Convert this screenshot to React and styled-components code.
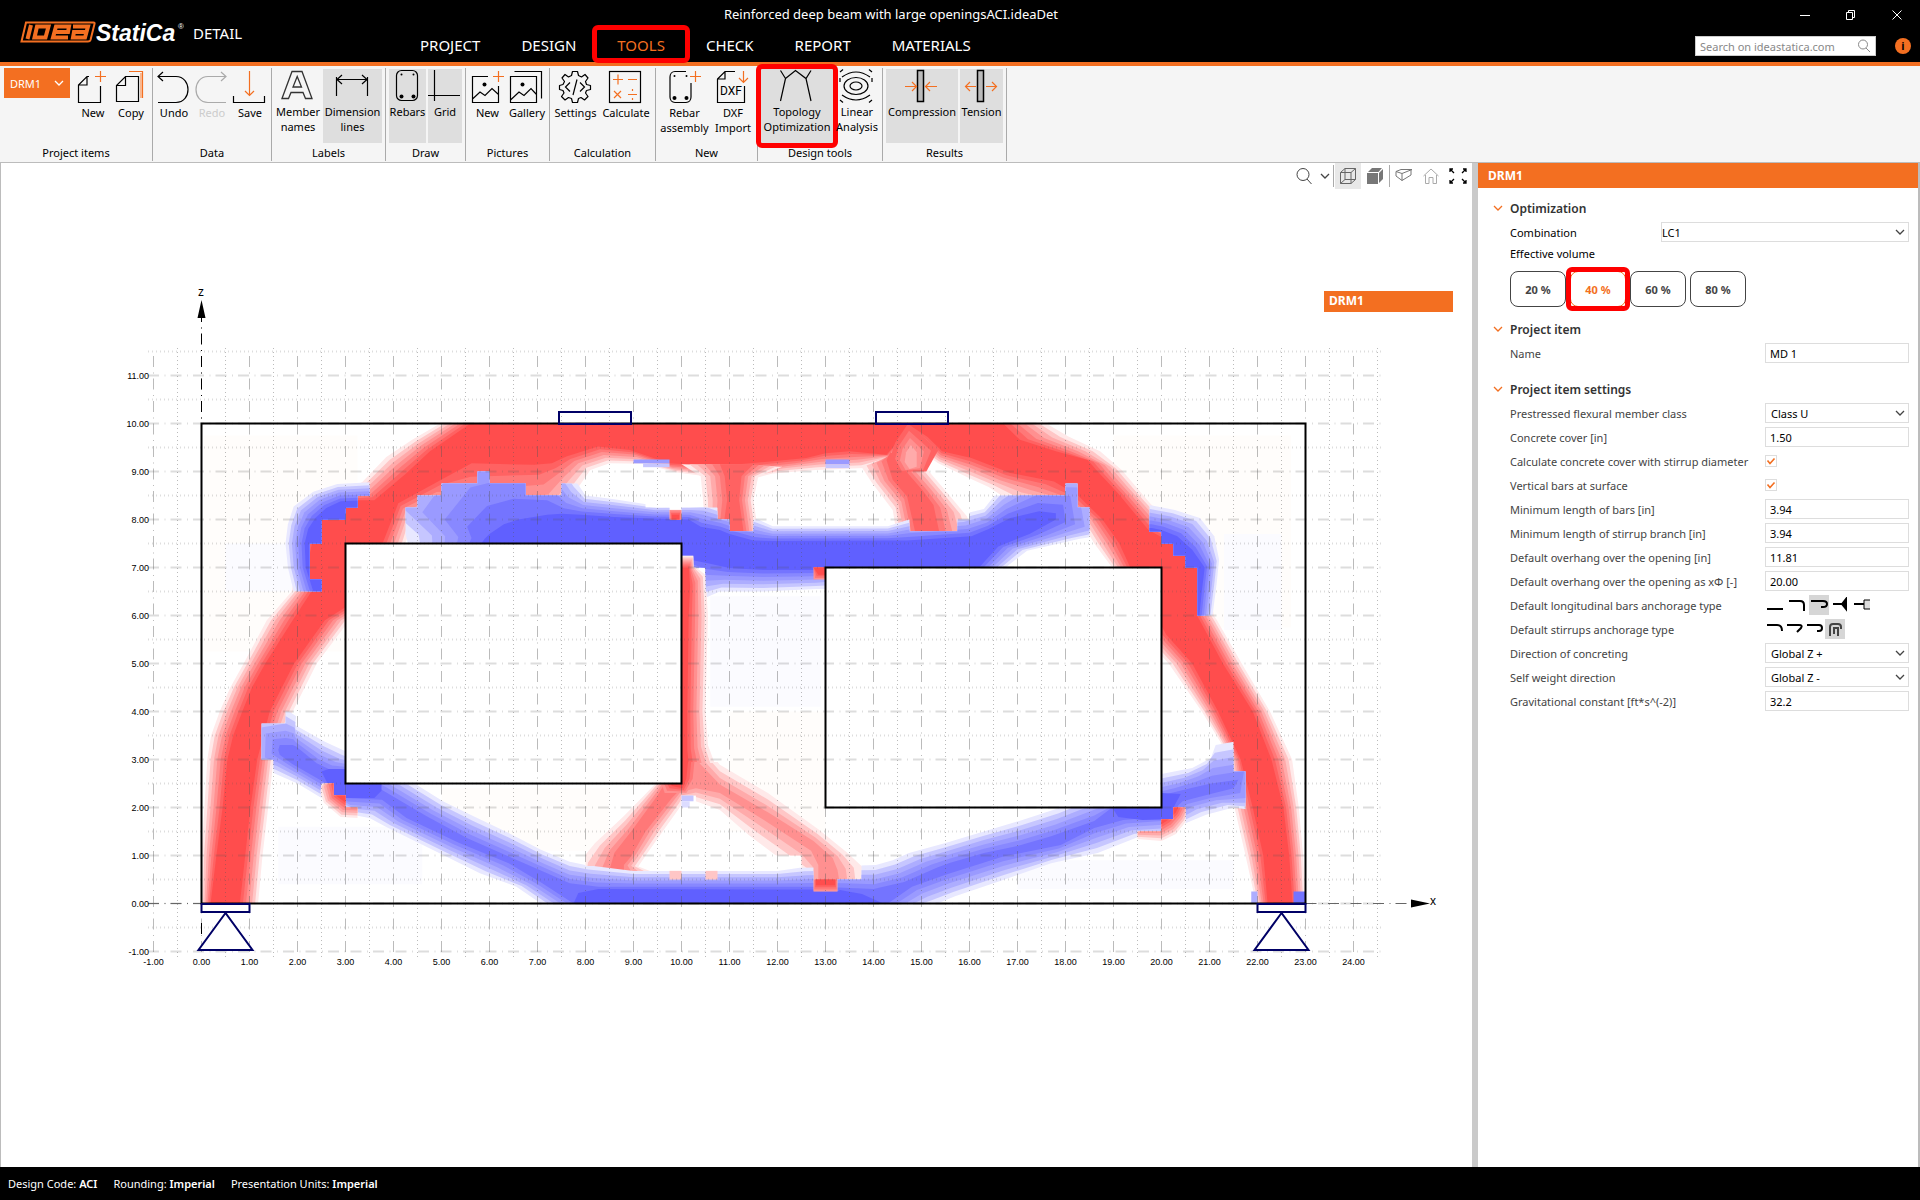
import React, { useState } from "react";
import styled, { createGlobalStyle } from "styled-components";

// ----------- Ribbon icons -----------

const ORANGE = "#f36f21";

const icons = {
  newItem: (
    <>
      <path d="M13 6.500H11L2.500 15V32.500H24.500V16M11 6.500V15H2.500" />
      <path d="M24.500 1V12M19 6.500H30" stroke={ORANGE} />
    </>
  ),
  copy: (
    <>
      <path d="M11.500 6.500H24.500V31.500H2.500V15.500ZM11.500 6.500V15.500H2.500" />
      <path d="M15 1.500H28.500V28" stroke={ORANGE} />
      <path d="M27 3V28" stroke="#f9b78f" strokeWidth="2" />
    </>
  ),
  undo: <path d="M1 6.500H19C35 6.500 35 32.500 19 32.500H1M6 2L1 6.500L6 11" />,
  redo: <path d="M31 6.500H13C-3 6.500 -3 32.500 13 32.500H31M26 2L31 6.500L26 11" />,
  save: (
    <>
      <path d="M0.500 26V32.500H31.500V26" />
      <path d="M16.500 1V25M12 21L16.500 25.500L21 21" stroke={ORANGE} />
    </>
  ),
  letterA: (
    <path d="M1 29.500L11 2.500H21L31 29.500H24.500L22 23.500H10L7.500 29.500ZM12 18H20.500L16.200 7.500Z" stroke="#333" strokeWidth="1.300" />
  ),
  dimension: <path d="M0.500 8V27M31.500 8V27M1 10.500H31M6 6L1 10.500L6 15M26 6L31 10.500L26 15" />,
  rebars: (
    <>
      <rect x="5.500" y="1.500" width="21" height="30" rx="5" />
      <g fill="#000" stroke="none">
        <circle cx="10.500" cy="27.500" r="2" />
        <circle cx="22.500" cy="27.500" r="2" />
        <circle cx="10.500" cy="5.500" r="1" />
        <circle cx="22.500" cy="5.500" r="1" />
      </g>
    </>
  ),
  grid: <path d="M6.500 1V32M0 26.500H32" />,
  picture: (
    <>
      <path d="M17 6.500H1.500V32.500H27.500V16M1.500 29L9 22L14 25.500L21 18.500L27.500 24.500" />
      <circle cx="13.500" cy="14.500" r="2" fill="#000" stroke="none" />
      <path d="M27.500 1V12M22 6.500H33" stroke={ORANGE} />
    </>
  ),
  gallery: (
    <>
      <path d="M0.500 6.500H26.500V32.500H0.500ZM4.500 1.500H31.500V28.500M0.500 30L9 22L14 25.500L21 18.500L26.500 24.500" />
      <circle cx="12.500" cy="14.500" r="2" fill="#000" stroke="none" />
    </>
  ),
  settings: (
    <>
      <path d="M13.500 1.500H18.500L19.500 5.500L22.500 7L26 4.500L29 8L26.500 11.500L27.500 14.500L31.500 15.500V19.500L27.500 20.500L26.500 23L29 26.500L25.500 30L22 27.500L19.500 28.500L18.500 32.500H13.500L12.500 28.500L9.500 27.500L6 30L2.500 26.500L5 23L4 20.500L0.500 19.500V15.500L4 14.500L5.500 11.500L3 8L6 4.500L9.500 7L12.500 5.500Z" strokeLinejoin="round" />
      <path d="M11 12.500L6.500 17L11 21.500M21 12.500L25.500 17L21 21.500M18 9.500L14 25" />
    </>
  ),
  calculate: (
    <>
      <rect x="0.500" y="1.500" width="31" height="31" />
      <path d="M4 9.500H14M9 4.500V14.500M19 9.500H28M5 21L12 28M12 21L5 28M19 24.500H28M23.500 19V21M23.500 28V30" stroke={ORANGE} />
    </>
  ),
  rebarNew: (
    <>
      <path d="M18 1.500H7C4 1.500 2 4 2 7V27C2 30 4 32.500 7 32.500H18C21 32.500 23 30 23 27V13" />
      <g fill="#000" stroke="none">
        <circle cx="6.500" cy="28" r="2" />
        <circle cx="18.500" cy="28" r="2" />
        <circle cx="6.500" cy="6" r="1" />
        <circle cx="18.500" cy="6" r="1" />
      </g>
      <path d="M27.500 1V12M22 6.500H33" stroke={ORANGE} />
    </>
  ),
  dxf: (
    <>
      <path d="M19 1.500H9L1.500 9V32.500H28.500V16M9 1.500V9H1.500" />
      <path d="M27.500 1V12M23 8L27.500 12.500L32 8" stroke={ORANGE} />
      <text x="4" y="25" fontSize="12" fontFamily="Roboto, sans-serif" fill="#000" stroke="none">DXF</text>
    </>
  ),
  topology: <path d="M0.500 1.500L5.500 9.500L0.500 32M5.500 9.500L15.500 1.500L26 9.500L31 1.500M26 9.500L31 32" />,
  linear: (
    <>
      <ellipse cx="16" cy="17" rx="6" ry="4" />
      <ellipse cx="16" cy="17" rx="12" ry="8.500" />
      <path d="M2 8Q16 -2 30 8M2 26Q16 36 30 26M0 3L3 0.500M32 3L29 0.500M0 31L3 33.500M32 31L29 33.500M0 13V9M32 13V9" />
    </>
  ),
  compression: (
    <>
      <rect x="12.500" y="1.500" width="6" height="31" fill="#bbb" strokeWidth="1.500" />
      <path d="M0 17.500H11M7 13L11.500 17.500L7 22M32 17.500H21M25 13L20.500 17.500L25 22" stroke={ORANGE} />
    </>
  ),
  tension: (
    <>
      <rect x="12.500" y="1.500" width="6" height="31" fill="#bbb" strokeWidth="1.500" />
      <path d="M0.500 17.500H11M5 13L0.500 17.500L5 22M31.500 17.500H21M27 13L31.500 17.500L27 22" stroke={ORANGE} />
    </>
  ),
};

const ribbon = [
  {
    name: "Project items",
    picker: true,
    items: [
      { label: "New", icon: "newItem", width: 38 },
      { label: "Copy", icon: "copy", width: 38 },
    ],
  },
  {
    name: "Data",
    items: [
      { label: "Undo", icon: "undo", width: 38 },
      { label: "Redo", icon: "redo", width: 38, disabled: true },
      { label: "Save", icon: "save", width: 38 },
    ],
  },
  {
    name: "Labels",
    toggles: true,
    items: [
      { label: "Member names", icon: "letterA", width: 46 },
      { label: "Dimension lines", icon: "dimension", width: 59, on: true },
    ],
  },
  {
    name: "Draw",
    toggles: true,
    items: [
      { label: "Rebars", icon: "rebars", width: 37, on: true },
      { label: "Grid", icon: "grid", width: 34, on: true },
    ],
  },
  {
    name: "Pictures",
    items: [
      { label: "New", icon: "picture", width: 39 },
      { label: "Gallery", icon: "gallery", width: 40 },
    ],
  },
  {
    name: "Calculation",
    items: [
      { label: "Settings", icon: "settings", width: 47 },
      { label: "Calculate", icon: "calculate", width: 54 },
    ],
  },
  {
    name: "New",
    items: [
      { label: "Rebar assembly", icon: "rebarNew", width: 53 },
      { label: "DXF Import", icon: "dxf", width: 44 },
    ],
  },
  {
    name: "Design tools",
    toggles: true,
    items: [
      { label: "Topology Optimization", icon: "topology", width: 72, on: true, marked: true },
      { label: "Linear Analysis", icon: "linear", width: 44 },
    ],
  },
  {
    name: "Results",
    toggles: true,
    items: [
      { label: "Compression", icon: "compression", width: 72, on: true },
      { label: "Tension", icon: "tension", width: 43, on: true },
    ],
  },
];

// ----------- Stress field -----------

// weakest to strongest
const red = ["#ffe9e9", "#ffc6c6", "#ffaaaa", "#ff9090", "#ff7878", "#ff6262", "#ff4d4d"];
const blue = ["#e8e8ff", "#c6c6ff", "#adadff", "#9a9aff", "#8888ff", "#7474ff", "#6060ff"];

// Each edge point is "outer/inner" in metres; the bands are interpolated between the two.
const fields = [
  {
    tone: red,
    edge:
      "0,0/0.19,0 0,1/0.31,1 0.06,2/0.44,2 0.12,3/0.54,3 0.2,3.5/0.66,3.5 0.38,4/0.85,4 0.6,4.5/1.05,4.5 0.88,5/1.33,5 1.36,5.9/1.9,5.9 1.88,6.5/2.29,6.5 2,7.2/2.2,7 2.3,8.2/2.4,8 3,8.6/3.1,8.4 3.35,8.78/3.6,8.4 3.85,9.3/4.25,8.95 4.39,9.66/4.76,9.42 4.97,10/5.6,10 " +
      "17.6,10/16.7,10 18.06,9.73/17.05,9.66 18.72,9.42/17.8,9.42 19.17,9.03/18.46,9.24 19.58,8.55/18.67,9 19.76,8.34/19.09,8.55 20.1,8/19.73,7.78 20.9,7.2/20.8,7.2 21.09,6/20.74,6 21.15,5.91/20.79,5.91 21.67,5/21.28,5 22.26,4/21.9,4 22.72,3/22.29,3 22.86,2/22.54,2 22.95,1/22.66,1 23,0/22.73,0 " +
      "21.97,0/22.21,0 21.75,1/22.12,1 21.52,2/21.9,2 21.45,3/21.65,3 20.84,4/21.18,4 20.15,5/20.64,5 19.6,5.6/20.1,5.6 18.97,7/19.35,7 18.6,7.5/19.12,7.5 18.3,8/18.77,8 17.85,8.3/18.26,8.5 16.75,8.45/17.76,8.79 16.4,8.68/16.85,8.97 16,8.86/16.04,9.28 15.35,9.17/15.43,9.42 15,9.4/15.13,9.72 14.8,9.8/14.78,9.95 " +
      "14.4,9.3/14.27,9.35 13.8,9.07/13.5,9.42 12.8,9.03/13,9.38 11.9,8.96/12.6,9.28 11.5,8.85/11.2,9.15 10.5,8.9/10.6,9.12 9.9,8.98/9.74,9.17 9.2,9.16/8.92,9.45 8.5,9.17/8.26,9.52 8.1,9.03/7.6,9.31 7.8,8.6/7.3,9.17 7.5,7.9/6.94,9.14 5.5,7.5/5.63,9.17 4.6,8/5.05,8.86 4.4,8/4.1,8.34 4.25,7.5/3.77,7.5 3.8,6.3/3.2,6.3 3.08,5.9/2.57,5.9 2.4,5/1.93,5 1.9,4/1.42,4 1.5,3/1.16,3 1.39,2/1.02,2 1.27,1/0.91,1 1.18,0/0.8,0",
  },
  // stub between the two upper holes
  {
    tone: red,
    peak: 5,
    edge: "10,9.15/10.8,9.15 10.4,8.9/10.9,8.9 10.45,8.4/10.95,8.4 10.5,7.7/10.85,7.7 11.6,7.7/11.3,7.7 11.5,8.4/11.2,8.4 11.6,8.9/11.25,8.9 12.1,9.1/11.5,9.15",
  },
  // diagonal strut under the right load
  {
    tone: red,
    peak: 5,
    edge: "13.75,9.1/14.27,9.24 13.97,8.76/14.4,8.83 14.4,8.2/14.7,8.48 14.5,7.6/14.9,7.6 16.1,7.6/15.4,7.6 15.95,8.06/15.25,8.3 15.5,8.6/15.03,8.6 15.2,8.95/14.7,8.98 14.95,9.3/14.5,9.3 14.6,9.4/14.35,9.4",
  },
  // softer wedge where the strut leaves the chord
  {
    tone: ["#ff6262", "#ff7878", "#ff9090", "#ffaaaa"],
    edge: "14.72,10/14.78,9.55 14.45,9.6/14.68,9.4 14.35,9.3/14.65,9.2 14.5,9/14.75,9.05 15.1,9/14.9,9.1 15.35,9.45/14.9,9.4",
  },
  {
    tone: blue,
    clip: "1.5,6.5 2.5,6.5 2.5,6.75 2.25,6.75 2.25,7.5 2.5,7.5 2.5,8 3,8 3,8.25 3.25,8.25 3.25,8.5 3.5,8.5 3.5,9 1.5,9",
    edge: "1.92,6.5/2.33,6.5 1.8,7/2.17,7 1.75,7.5/2.15,7.5 1.8,7.9/2.22,7.8 1.92,8.27/2.37,8.03 2.33,8.58/2.6,8.24 2.83,8.74/2.9,8.38 3.6,8.78/3.5,8.4 3.6,7/3.6,7 3,6.5/3,6.5",
  },
  {
    tone: blue,
    clip:
      "4.25,7.4 4.25,8.25 4.5,8.25 4.5,8.5 5,8.5 5,8.75 5.75,8.75 5.75,9 6,9 6,8.75 6.75,8.75 6.75,8.5 7.5,8.5 7.5,8.75 9.25,8.75 9.25,8.25 9.75,8.25 9.75,8 10,8 10,8.25 10.75,8.25 10.75,8 11,8 11,7.75 11.5,7.75 11.5,8 14.75,8 14.75,7.75 15.75,7.75 15.75,8 16,8 16,8.5 18,8.5 18,8.75 18.25,8.75 18.25,8.25 18.5,8.25 18.5,7 13,7 13,6.3 10.5,6.3 10.5,7 10.25,7 10.25,7.25 10,7.25 10,7.4",
    edge:
      "4.3,7.5/5.83,7.5 4.25,7.7/5.9,7.6 3.2,8.6/6,7.7 4.2,10.2/6.3,7.9 6,10.6/6.6,8 7.2,9.9/7.2,8.1 7.8,8.8/7.5,8.12 8,8.5/7.9,8.1 8.6,8.42/8.6,8.05 9.5,8.28/9.4,8.02 10.2,8.3/10.15,8 10.5,8.35/10.4,7.85 10.9,8.2/10.8,7.78 11.3,8.1/11,7.7 11.6,8/11.5,7.56 11.9,7.86/11.9,7.55 14.3,7.86/14.3,7.56 14.8,8.02/14.7,7.56 15.8,8.1/16.04,7.65 16.3,8.22/16.4,7.8 16.6,8.6/16.85,8.03 17.3,9.2/17.45,8.17 18.7,9.2/17.8,8.13 19,7.7/17.8,8 18.3,7.6/17.25,7.7 17.2,7.35/16.6,7.44 16.75,7/16.2,7 " +
      "13,6.55/13,7 12.8,6.55/12.8,6.95 11.7,6.5/11.7,6.95 10.8,6.5/11,6.99 10.45,6.35/10.5,7.1 10,6.9/10,7.2 10,7.5/10,7.5",
  },
  {
    tone: blue,
    clip: "19.75,8.5 19.75,7.75 20,7.75 20,7.5 20.25,7.5 20.25,7.25 20.5,7.25 20.5,7 20.75,7 20.75,6 22,6 22,8.5",
    edge: "19.6,8.32/19.6,7.82 19.75,8.3/19.8,7.82 20.28,8.2/20,7.78 20.8,8.03/20.33,7.65 21.1,7.65/20.64,7.37 21.2,7.16/20.9,7 21.15,6.67/20.84,6.5 21.05,5.9/20.78,5.9 20.5,6/20.5,6 19.6,7.4/19.6,7.4",
  },
  // V below the wall between the openings
  {
    tone: red,
    peak: 4,
    clip: "8,0.5 8,3 10,3 10,0.5",
    edge: "7.9,0.9/8.5,0.7 8.2,1.26/8.6,1.05 8.78,1.8/8.95,1.5 9.2,2.23/9.5,2.25 9.46,2.5/9.65,2.5 10.2,2.5/10.1,2.5 10,2.05/9.8,2.2 9.63,1.53/9.25,1.5 9.29,1.05/8.95,0.98 9.1,0.77/8.8,0.8 9.6,0.58/8.8,0.6 9.6,0.4/8.8,0.4 7.9,0.4/8.3,0.4",
  },
  {
    tone: red,
    peak: 3,
    clip: "10,2.95 10,2.25 10.3,2.25 10.3,1 12.5,1 12.5,0.5 14,0.5 14,2.95",
    edge: "9.9,3.2/9.9,3.2 10.55,3.2/10.3,3 10.8,2.89/10.8,2.48 11.8,2.3/11.8,1.9 12.87,1.53/12.75,1.3 13.46,1.05/13.15,0.95 13.76,0.77/13.25,0.7 13.8,0.4/13.3,0.4 12.4,0.4/12.85,0.4 12.5,0.7/12.85,0.8 12.1,0.9/12.7,1.1 11.4,1.43/11.7,1.75 10.8,1.95/10.8,2.3 10.3,2.13/10.3,2.4 9.9,2.1/9.9,2.3",
  },
  {
    tone: red,
    edge: "10,7.25/10,7 10.25,7.25/10.15,7 10.3,7/10.16,6.9 10.5,6.85/10.18,6.6 10.55,6/10.15,6 10.5,4/10.12,4 10.55,3.3/10.12,3.2 10.7,2.9/10.15,2.9 10,2.9/10,2.9",
    clip: "10,7.25 10.25,7.25 10.25,7 10.5,7 10.5,6.5 11,6.5 11,2.93 10,2.93",
  },
  {
    tone: red,
    from: 3,
    clip: "9.4,2.5 10,2.5 10,2.95 10.5,2.95 10.5,2.25 10,2.25 9.6,2.1",
    edge: "9.65,2.3/9.8,2.45 9.55,2.6/9.7,2.6 10,3.1/10,3.1 10.35,3.1/10.15,3.1 10.3,2.6/10.1,2.6 10.1,2.3/10.02,2.4",
  },
  {
    tone: blue,
    peak: 5,
    clip: "1.25,3 1.25,3.75 1.75,3.75 1.75,4 3.2,4 3.2,3 8,3 8,0.5 12.75,0.5 12.75,0.75 12.5,0.75 12.5,0.78 8,0.78 8,0.5 12.75,0.5 12.75,0.25 13.25,0.25 13.25,0.5 13.75,0.5 13.75,1 15,2 20,2.2 20,3.5 21.5,3.5 21.5,2.75 21.75,2.75 21.75,1.9 20.5,1.5 20.5,2 20.25,2 20.25,1.75 20,1.75 20,1.5 19.5,1.5 19.5,0 3.25,0 3.25,2 3,2 3,2.25 2.75,2.25 2.75,2.5 2.5,2.5 2.5,1.5 1.5,2 1.5,3",
    edge:
      "0.9,3.9/1.63,3.3 1.76,4.05/1.75,3.3 1.97,3.9/1.9,3.3 1.95,3.72/1.97,3.27 2.57,3.37/2.4,2.92 3,3.17/2.65,2.8 3.4,3/3,2.8 4.44,2.5/3.7,2.4 5.03,2.13/4.7,1.81 5.7,1.8/5.54,1.36 6.4,1.47/6.4,0.98 7.07,1.12/7.2,0.63 7.67,0.87/7.67,0.42 8,0.8/8.27,0.35 9,0.68/9,0.35 12,0.68/12,0.35 12.5,0.75/12.8,0.35 13.4,0.78/13.4,0.33 14.05,0.8/14,0.3 14.4,0.9/14.64,0.45 " +
      "14.74,1.05/15.33,0.75 15.5,1.26/15.6,0.85 16.3,1.5/16.3,1.05 17.1,1.74/17,1.2 17.9,2/17.7,1.4 18.6,2.3/18.6,1.72 20,2.7/18.97,2 20.64,2.82/20.2,2.3 21.03,3.03/20.6,2.4 21.13,3.3/21.03,2.5 22.2,3.5/21.6,2.58 22.2,1.9/21.5,2.4 21.5,2/20.9,2.25 20.93,1.85/20.44,2.13 20.5,1.67/20.25,1.95 20,1.4/20,1.8 19.5,1.38/19.2,1.74 18.67,1.05/18.6,1.57 17.7,0.84/17.9,1.22 16.7,0.49/16.7,0.98 15.7,0.15/15.5,0.6 15.33,0/14.8,0.35 " +
      "15.2,0/14.3,0 7.07,0/7.75,0 6.56,0.35/7.1,0.42 5.8,0.63/6.4,0.84 4.95,1.05/5.37,1.26 3.84,1.6/4.27,1.78 3.5,1.78/3.76,2.16 3.25,1.83/3,2.2 2.5,2.2/2.6,2.5 2,2.5/1.9,2.9 1.5,2.72/1.63,3.1 0.9,2.8/1.6,3.2",
  },
  // fully used parts of the lower tie
  { tone: blue, from: 6, edge: "2.5,2.75 2.65,2.8 3,2.8 3,2.5 3.75,2.5 3.75,2.35 3.6,2.2 3,2.2 3,2.25 2.75,2.25" },
  { tone: blue, from: 6, edge: "7.75,0 7.85,0.22 8.27,0.3 12.75,0.29 12.75,0.25 13.25,0.25 13.3,0.28 13.76,0.2 14.2,0" },
  { tone: blue, from: 6, edge: "18.97,2 20,2.3 20.4,2.28 20.25,2 20.25,1.75 20,1.75 19.6,1.74 19.1,1.8" },
  // red cells next to the opening corners and under the V
  { tone: red, clip: "2.5,2.5 2.75,2.5 2.75,2.25 3,2.25 3,2 3.25,2 3.25,1.7 2.4,1.7", edge: "2.45,2.4/2.75,2.5 2.55,2.1/2.8,2.25 2.9,1.8/3,2.1 3.3,1.78/3.2,2.1 3.3,2.6/3.3,2.6 2.6,2.7/2.75,2.6" },
  { tone: red, clip: "19.5,1.5 20,1.5 20,1.75 20.25,1.75 20.25,2 20.5,2 20.5,1 19.5,1", edge: "19.4,1.35/19.7,1.6 20,1.3/20,1.65 20.3,1.45/20.15,1.75 20.5,1.7/20.3,1.9 20.7,2.1/20.4,2.1 19.5,2.1/19.6,2.1" },
  { tone: red, from: 3, edge: "12.75,0.25/12.8,0.38 12.75,0.5/12.8,0.5 13.25,0.5/13.2,0.5 13.25,0.25/13.2,0.38" },
  { tone: red, from: 3, edge: "12.75,6.75/12.85,6.85 12.75,7/12.75,7 13,7/13,7 13,6.75/13,6.85" },
  { tone: red, from: 3, edge: "9.75,8/9.8,8 9.75,8.2/9.8,8.1 10,8.2/9.95,8.1 10,8/9.95,8" },
];

// single cells: colour, x, z (top left), width, height
const cells = [
  ["#ffc6c6", 9.75, 0.68, 0.25, 0.18],
  ["#ffc6c6", 10.5, 0.68, 0.25, 0.18],
  ["#c6c6ff", 10, 2.25, 0.25, 0.12],
  ["#dcdcff", 10, 2.13, 0.17, 0.13],
  ["#9a9aff", 13, 9.25, 0.5, 0.1],
  ["#c6c6ff", 13, 9.15, 0.5, 0.08],
  ["#9a9aff", 9, 9.25, 0.75, 0.08],
  ["#c6c6ff", 9.2, 9.17, 0.55, 0.08],
  ["#7474ff", 22.75, 0.25, 0.25, 0.25],
  ["#adadff", 21.87, 0.25, 0.13, 0.25],
];

// barely stressed zones behind the bands
const tints = [
  ["#fffdfb", 0.05, 9.75, 3.2, 4.5],
  ["#fbfbff", 0.5, 7.5, 1.5, 1],
  ["#fffdfb", 19, 9.75, 3.7, 4],
  ["#fbfbff", 21.3, 7.7, 1.2, 2],
  ["#fbfbff", 10.6, 6.4, 2.3, 2.3],
  ["#fffdfb", 11, 4, 2, 2.5],
  ["#fbfbff", 1.6, 1.6, 3, 1.2],
  ["#fffdfb", 5, 2.4, 3.5, 1.3],
  ["#fbfbff", 17, 0.9, 4.5, 0.6],
];

const SCALE = 48;
const X0 = 201.5;
const Y0 = 903.5;
const px = (x) => X0 + x * SCALE;
const py = (z) => Y0 - z * SCALE;

const parse = (list) => list.split(" ").map((p) => p.split(",").map(Number));
const toPoints = (list) => list.map(([x, z]) => `${px(x).toFixed(1)},${py(z).toFixed(1)}`).join(" ");

function FieldBands({ field, id }) {
  const { tone, edge, clip, from = 0, peak = tone.length - 1 } = field;
  const pairs = edge.split(" ").map((p) => p.split("/").map((q) => q.split(",").map(Number)));
  const steps = peak - from;
  const layers = [];
  for (let i = 0; i <= steps; i++) {
    const t = steps ? i / steps : 0;
    const pts = pairs.map(([o, n = o]) => [o[0] + (n[0] - o[0]) * t, o[1] + (n[1] - o[1]) * t]);
    layers.push(<polygon key={i} points={toPoints(pts)} fill={tone[from + i]} />);
  }
  return (
    <>
      {clip && (
        <clipPath id={id}>
          <polygon points={toPoints(parse(clip))} />
        </clipPath>
      )}
      <g clipPath={clip ? `url(#${id})` : undefined}>{layers}</g>
    </>
  );
}

const range = (from, to) => Array.from({ length: to - from + 1 }, (_, i) => from + i);

function Support({ x }) {
  return (
    <g fill="#fff" stroke="#000066" strokeWidth="2">
      <rect x={px(x)} y={904} width={SCALE} height={8} />
      <path d={`M${px(x) + 24} 913L${px(x) - 3} 950H${px(x) + 51}Z`} />
    </g>
  );
}

function BeamDrawing() {
  const left = 148;
  const right = 1382;
  const top = 348;
  const bottom = 957;
  const dashDot = "11 5.5 1 5";
  return (
    <Drawing viewBox="1 189 1471 978" role="img" aria-label="Topology optimization">
      {tints.map(([fill, x, z, w, h], i) => (
        <rect key={i} fill={fill} x={px(x)} y={py(z)} width={w * SCALE} height={h * SCALE} />
      ))}
      {fields.map((field, i) => (
        <FieldBands key={i} field={field} id={`field-${i}`} />
      ))}
      {cells.map(([fill, x, z, w, h], i) => (
        <rect key={i} fill={fill} x={px(x)} y={py(z)} width={w * SCALE} height={h * SCALE} />
      ))}
      <rect x={px(3)} y={py(7.5)} width={7 * SCALE} height={5 * SCALE} fill="#fff" />
      <rect x={px(13)} y={py(7)} width={7 * SCALE} height={5 * SCALE} fill="#fff" />

      <g stroke="#555" strokeOpacity="0.4" strokeWidth="1" fill="none">
        {range(-1, 24).map((x) => (
          <g key={x}>
            <path d={`M${px(x)} ${356}V${bottom}`} strokeDasharray={dashDot} />
            <path d={`M${px(x + 0.5)} ${top}V${bottom}`} strokeDasharray="1 3" />
          </g>
        ))}
      </g>
      <g stroke="#555" strokeOpacity="0.2" strokeWidth="2" fill="none">
        {range(-1, 11).map((z) => (
          <g key={z}>
            <path d={`M${left} ${py(z)}H${right}`} strokeDasharray={dashDot} />
            <path d={`M${left} ${py(z + 0.5)}H${right}`} strokeDasharray="1 3" />
          </g>
        ))}
      </g>

      <g stroke="#000" fill="none">
        <path d={`M${px(0)} 311V${py(10)}M${px(0)} 923V935`} strokeDasharray={dashDot} />
        <path d={`M${px(23)} ${py(0)}H1411M${left} ${py(0)}H${px(0)}`} stroke="#666" strokeDasharray={dashDot} />
        <g strokeWidth="2">
          <rect x={px(0)} y={py(10)} width={23 * SCALE} height={10 * SCALE} />
          <rect x={px(3)} y={py(7.5)} width={7 * SCALE} height={5 * SCALE} />
          <rect x={px(13)} y={py(7)} width={7 * SCALE} height={5 * SCALE} />
        </g>
      </g>
      <path d="M201.500 300L205.500 318H197.500ZM1430 903.500L1411 899.500V907.500Z" />
      <g fill="none" stroke="#000066" strokeWidth="2">
        <rect x="559" y="412" width="72" height="12" />
        <rect x="876" y="412" width="72" height="12" />
      </g>
      <Support x={0} />
      <Support x={22} />

      <AxisText x="201" y="296" $size={12} textAnchor="middle">z</AxisText>
      <AxisText x="1433" y="905" $size={12} textAnchor="middle">x</AxisText>
      {range(-1, 24).map((x) => (
        <AxisText key={x} x={px(x)} y="965" textAnchor="middle">{x.toFixed(2)}</AxisText>
      ))}
      {range(-1, 11).map((z) => (
        <AxisText key={z} x="149" y={py(z) + 3} textAnchor="end">{z.toFixed(2)}</AxisText>
      ))}

      <rect x="1324" y="291" width="129" height="21" fill={ORANGE} />
      <TagText x="1329" y="305">DRM1</TagText>
    </Drawing>
  );
}

// ----------- Properties -----------

const settings = [
  { label: "Prestressed flexural member class", type: "select", value: "Class U" },
  { label: "Concrete cover [in]", value: "1.50" },
  { label: "Calculate concrete cover with stirrup diameter", type: "check" },
  { label: "Vertical bars at surface", type: "check" },
  { label: "Minimum length of bars [in]", value: "3.94" },
  { label: "Minimum length of stirrup branch [in]", value: "3.94" },
  { label: "Default overhang over the opening [in]", value: "11.81" },
  { label: "Default overhang over the opening as xΦ [-]", value: "20.00" },
  { label: "Default longitudinal bars anchorage type", type: "bars" },
  { label: "Default stirrups anchorage type", type: "stirrups" },
  { label: "Direction of concreting", type: "select", value: "Global Z +" },
  { label: "Self weight direction", type: "select", value: "Global Z -" },
  { label: "Gravitational constant [ft*s^(-2)]", value: "32.2" },
];

const anchorage = {
  bars: [
    ["Straight", <path key="p" d="M1 12H17" />],
    ["Bend", <path key="p" d="M1 4H12Q16 4 16 8V14" />],
    ["Hook", <path key="p" d="M1 4H13Q17 4 17 7T13 10H11" />],
    ["Head", <path key="p" d="M1 7H12M10 7L14 2V12Z" fill="#000" />],
    ["Plate", <g key="p"><path d="M0 7H10" /><path d="M16 3H10V12H16" fill="#ddd" strokeWidth="1" /></g>],
  ],
  stirrups: [
    ["Bend 90", <path key="p" d="M1 4H11Q16 4 16 10" />],
    ["Bend 135", <path key="p" d="M1 4H13Q17 4 15 7L11 11" />],
    ["Hook", <path key="p" d="M1 4H13Q16 4 16 7T13 10H11" />],
    ["Closed", <path key="p" d="M4 15V6Q4 3 7 3H12Q15 3 15 6V8M8 13V7H12V15" stroke="#444" />],
  ],
};

function Chevron({ color = "#444" }) {
  return (
    <svg width="10" height="10" viewBox="0 0 10 10" fill="none" stroke={color} strokeWidth="1.300" aria-hidden="true">
      <path d="M1 3L5 7L9 3" />
    </svg>
  );
}

function Dropdown({ id, value, tight }) {
  return (
    <SelectBox>
      <SelectInput id={id} $tight={tight} defaultValue={value}>
        <option>{value}</option>
      </SelectInput>
      <Chevron />
    </SelectBox>
  );
}

function Field({ row, id }) {
  if (row.type === "select") return <Dropdown id={id} value={row.value} />;
  if (row.type === "check") {
    return (
      <CheckBox>
        <input id={id} type="checkbox" defaultChecked />
        <svg width="12" height="12" viewBox="0 0 12 12" fill="none" stroke={ORANGE} strokeWidth="1.600" aria-hidden="true">
          <path d="M2.500 5.500L5 8.500L9.500 3.500" />
        </svg>
      </CheckBox>
    );
  }
  if (row.type) {
    const on = row.type === "bars" ? "Hook" : "Closed";
    return (
      <AnchorageGroup id={id} role="group" aria-label={row.label} $wide={row.type === "bars"}>
        {anchorage[row.type].map(([name, shape]) => (
          <AnchorageButton key={name} aria-label={name} $on={name === on}>
            <svg width="18" height="16" viewBox="0 0 18 16" fill="none" stroke="#000" strokeWidth="2">{shape}</svg>
          </AnchorageButton>
        ))}
      </AnchorageGroup>
    );
  }
  return <TextInput id={id} defaultValue={row.value} />;
}

function Properties() {
  const [volume, setVolume] = useState(40);
  return (
    <Panel>
      <PanelTitle>DRM1</PanelTitle>
      <Section>
        <SectionTitle><Chevron color={ORANGE} />Optimization</SectionTitle>
        <Row $dark $split="wide">
          <label htmlFor="combination">Combination</label>
          <Dropdown id="combination" value="LC1" tight />
        </Row>
        <VolumeLabel>Effective volume</VolumeLabel>
        <Volumes>
          {[20, 40, 60, 80].map((v) => (
            <VolumeButton key={v} $on={v === volume} onClick={() => setVolume(v)}>
              {v} %
              {v === 40 && <Mark />}
            </VolumeButton>
          ))}
        </Volumes>
      </Section>
      <Section>
        <SectionTitle><Chevron color={ORANGE} />Project item</SectionTitle>
        <Row>
          <label htmlFor="name">Name</label>
          <TextInput id="name" defaultValue="MD 1" />
        </Row>
      </Section>
      <Section>
        <SectionTitle><Chevron color={ORANGE} />Project item settings</SectionTitle>
        {settings.map((row, i) => (
          <Row key={row.label}>
            <label htmlFor={`setting-${i}`}>{row.label}</label>
            <Field row={row} id={`setting-${i}`} />
          </Row>
        ))}
      </Section>
    </Panel>
  );
}

// ----------- Page -----------

function Logo() {
  return (
    <svg width="164" height="28" viewBox="0 0 164 28" role="img" aria-label="IDEA StatiCa">
      <path d="M6 3.500H73.500Q75 3.500 74.500 5L70.500 21Q70 22.500 68 22.500H1.500Z" fill="none" stroke={ORANGE} strokeWidth="2" />
      <g fill="none" stroke={ORANGE} strokeWidth="4">
        <path d="M11 6L7.500 20" />
        <path d="M17 7.500H28.500L25.500 18.500H14.500Z" />
        <path d="M48 18.500H33L36 7.500H49L48 13H35" />
        <path d="M53 7.500H68L65 18.500H53L54 13H66" />
      </g>
      <text x="76" y="22" fontFamily="Liberation Sans, sans-serif" fontWeight="700" fontStyle="italic" fontSize="23" fill="#fff">StatiCa</text>
      <text x="164" y="10" textAnchor="end" fontSize="8" fontFamily="Liberation Sans, sans-serif" fill="#fff">®</text>
    </svg>
  );
}

const tabs = ["PROJECT", "DESIGN", "TOOLS", "CHECK", "REPORT", "MATERIALS"];

export default function App() {
  return (
    <>
      <GlobalStyle />
      <Window>
        <Header>
          <Brand>
            <Logo />
            <span>DETAIL</span>
          </Brand>
          <Tabs>
            {tabs.map((tab) => (
              <Tab key={tab} href="#" $on={tab === "TOOLS"}>
                {tab}
                {tab === "TOOLS" && <Mark />}
              </Tab>
            ))}
          </Tabs>
          <FileName>Reinforced deep beam with large openingsACI.ideaDet</FileName>
          <HeaderRight>
            <WindowButtons>
              <button aria-label="Minimize">
                <svg width="10" height="10" stroke="#fff"><path d="M0 5.500H10" /></svg>
              </button>
              <button aria-label="Restore">
                <svg width="10" height="10" stroke="#fff" fill="none"><path d="M0.500 2.500H6.500V9.500H0.500ZM2.500 2V0.500H8.500V7.500H7" /></svg>
              </button>
              <button aria-label="Close">
                <svg width="10" height="10" stroke="#fff"><path d="M0.500 0.500L9.500 9.500M9.500 0.500L0.500 9.500" /></svg>
              </button>
            </WindowButtons>
            <SearchRow>
              <SearchBox>
                <input aria-label="Search" placeholder="Search on ideastatica.com" />
                <svg width="14" height="14" fill="none" stroke="#888"><circle cx="6" cy="5.500" r="4.500" /><path d="M9 9L13 13" /></svg>
              </SearchBox>
              <InfoButton aria-label="Info">i</InfoButton>
            </SearchRow>
          </HeaderRight>
        </Header>

        <Ribbon>
          {ribbon.map((group) => (
            <Group key={group.name + group.items[0].icon}>
              <GroupItems $toggles={group.toggles}>
                {group.picker && (
                  <ItemPicker>
                    DRM1
                    <Chevron color="#fff" />
                  </ItemPicker>
                )}
                {group.items.map((item) => (
                  <Tool key={item.label} $width={item.width} $on={item.on} $toggle={group.toggles} disabled={item.disabled}>
                    <svg width="34" height="34" viewBox="0 0 34 34" fill="none" stroke={item.disabled ? "#aaa" : "#000"} strokeWidth="1.200" aria-hidden="true">
                      {icons[item.icon]}
                    </svg>
                    <span>{item.label}</span>
                    {item.marked && <Mark />}
                  </Tool>
                ))}
              </GroupItems>
              <GroupName>{group.name}</GroupName>
            </Group>
          ))}
        </Ribbon>

        <Main>
          <Canvas>
            <ViewBar>
              <ViewButton aria-label="Zoom">
                <svg width="18" height="18" fill="none" stroke="#444"><circle cx="8" cy="7.500" r="6" /><path d="M12 12L16.500 17" /></svg>
              </ViewButton>
              <ViewButton aria-label="Zoom options" $narrow><Chevron /></ViewButton>
              <Divider />
              <ViewButton aria-label="Wireframe" $on>
                <svg width="18" height="18" fill="none" stroke="#666"><path d="M1.500 5.500L6 1.500H16.500V12.500L12 16.500H1.500ZM1.500 5.500H12V16.500M12 5.500L16.500 1.500M6 1.500V12.500H16.500M6 12.500L1.500 16.500" /></svg>
              </ViewButton>
              <ViewButton aria-label="Solid">
                <svg width="18" height="18" fill="#777"><path d="M1 6H12V17H1ZM2 5L6 1H16L12.500 5ZM13 6L17 2V12L13 16Z" /></svg>
              </ViewButton>
              <Divider />
              <ViewButton aria-label="Clip">
                <svg width="18" height="18" fill="none" stroke="#777"><path d="M1 4.500L6 2.500H17L7 6.500ZM1 4.500V9L7 13.500V6.500M7 13.500L16 8V3" /></svg>
              </ViewButton>
              <ViewButton aria-label="Home">
                <svg width="18" height="18" fill="none" stroke="#aaa"><path d="M1.500 9L9 2L16.500 9M3.500 8V16.500H7V10.500H11V16.500H14.500V8" /></svg>
              </ViewButton>
              <ViewButton aria-label="Fit">
                <svg width="18" height="18" fill="none" stroke="#000" strokeWidth="1.300"><path d="M1 5V2H4M1 2L5 6M17 5V2H14M17 2L13 6M1 13V16H4M1 16L5 12M17 13V16H14M17 16L13 12" /></svg>
              </ViewButton>
            </ViewBar>
            <BeamDrawing />
          </Canvas>
          <Properties />
        </Main>

        <Footer>
          <span>Design Code: <b>ACI</b></span>
          <span>Rounding: <b>Imperial</b></span>
          <span>Presentation Units: <b>Imperial</b></span>
        </Footer>
      </Window>
    </>
  );
}

// ----------- Style -----------

const GlobalStyle = createGlobalStyle`
  * {
    box-sizing: border-box;
  }
  body {
    margin: 0;
    font-family: "Noto Sans", "Open Sans", sans-serif;
    font-size: 11px;
    color: #000;
  }
  button, input, select {
    font: inherit;
    color: inherit;
  }
`;

const Window = styled.div`
  display: flex;
  flex-direction: column;
  min-height: 100vh;
`;

const Mark = styled.i`
  position: absolute;
  inset: -5px;
  border: 5px solid #ff0000;
  border-radius: 6px;
  pointer-events: none;
`;

const Header = styled.header`
  position: relative;
  display: flex;
  height: 66px;
  background: #000;
  color: #fff;
  border-bottom: 4px solid ${ORANGE};
`;

const Brand = styled.div`
  display: flex;
  align-items: center;
  gap: 9px;
  width: 400px;
  padding: 4px 0 0 20px;
  font-size: 15px;
`;

const Tabs = styled.nav`
  display: flex;
  align-self: flex-end;
  gap: 1px;
`;

const Tab = styled.a`
  position: relative;
  z-index: 1;
  height: 32px;
  padding: 4px 20px 0;
  font-size: 15px;
  line-height: 22px;
  text-decoration: none;
  color: ${(p) => (p.$on ? ORANGE : "#fff")};
  border-bottom: 4px solid ${(p) => (p.$on ? ORANGE : "transparent")};
`;

const FileName = styled.div`
  position: absolute;
  top: 5px;
  left: 0;
  right: 0;
  padding-right: 138px;
  text-align: center;
  font-size: 13px;
  line-height: 18px;
  pointer-events: none;
`;

const HeaderRight = styled.div`
  display: flex;
  flex-direction: column;
  justify-content: space-between;
  margin-left: auto;
  padding: 8px 9px 6px 0;
`;

const WindowButtons = styled.div`
  display: flex;
  justify-content: flex-end;
  gap: 36px;
  padding-right: 9px;

  button {
    display: flex;
    padding: 2px 0;
    border: 0;
    background: none;
  }
`;

const SearchRow = styled.div`
  display: flex;
  align-items: center;
  gap: 19px;
`;

const SearchBox = styled.div`
  display: flex;
  align-items: center;
  width: 181px;
  height: 20px;
  padding: 0 4px;
  background: #fff;
  border: 1px solid #ccc;

  input {
    flex: 1;
    min-width: 0;
    padding: 0;
    border: 0;
    outline: 0;
    color: #000;
  }
  input::placeholder {
    color: #888;
  }
`;

const InfoButton = styled.button`
  width: 16px;
  height: 16px;
  padding: 0;
  border: 0;
  border-radius: 50%;
  background: ${ORANGE};
  color: #000;
  font-weight: 700;
  line-height: 16px;
`;

const Ribbon = styled.div`
  display: flex;
  height: 97px;
  padding: 2px 0 1px;
  background: #f5f5f5;
  border-bottom: 1px solid #bcbcbc;
`;

const Group = styled.section`
  display: flex;
  flex-direction: column;
  justify-content: space-between;
  border-right: 1px solid #aaa;
`;

const GroupItems = styled.div`
  display: flex;
  gap: ${(p) => (p.$toggles ? 2 : 0)}px;
  padding: ${(p) => (p.$toggles ? "1px 3px 0" : "0 2px")};
`;

const ItemPicker = styled.button`
  display: flex;
  align-items: center;
  justify-content: space-between;
  width: 66px;
  height: 30px;
  margin: 0 4px 0 2px;
  padding: 0 6px;
  border: 0;
  background: ${ORANGE};
  color: #fff;
`;

const Tool = styled.button`
  position: relative;
  display: flex;
  flex-direction: column;
  align-items: center;
  gap: 1px;
  width: ${(p) => p.$width}px;
  height: 74px;
  padding: ${(p) => (p.$toggle ? 0 : 2)}px 0 0;
  border: 0;
  background: ${(p) => (p.$on ? "#dedede" : "none")};
  color: ${(p) => (p.disabled ? "#ccc" : "#000")};
  line-height: 15px;

  svg {
    flex: none;
    overflow: visible;
  }
`;

const GroupName = styled.div`
  text-align: center;
  line-height: 16px;
`;

const Main = styled.main`
  display: flex;
  flex: 1;
`;

const Canvas = styled.section`
  display: flex;
  flex-direction: column;
  flex: 1;
  min-width: 0;
  border-left: 1px solid #bcbcbc;
`;

const ViewBar = styled.div`
  display: flex;
  align-items: center;
  justify-content: flex-end;
  gap: 1px;
  height: 26px;
  padding-right: 1px;
`;

const ViewButton = styled.button`
  display: flex;
  align-items: center;
  justify-content: center;
  width: ${(p) => (p.$narrow ? 14 : 26)}px;
  height: 26px;
  padding: 0;
  border: 0;
  background: ${(p) => (p.$on ? "#e8e8e8" : "none")};
`;

const Divider = styled.i`
  width: 1px;
  height: 22px;
  background: #aaa;
`;

const Drawing = styled.svg`
  display: block;
  flex: 1;
  width: 100%;
  min-height: 0;
`;

const AxisText = styled.text`
  font-family: "Liberation Sans", Arial, sans-serif;
  font-size: ${(p) => p.$size || 9}px;
`;

const TagText = styled.text`
  font-size: 12px;
  font-weight: 700;
  fill: #fff;
`;

const Panel = styled.aside`
  width: 448px;
  border-left: 6px solid #cacaca;
  border-right: 2px solid #bcbcbc;
`;

const PanelTitle = styled.h2`
  margin: 0 0 8px;
  padding-left: 10px;
  background: ${ORANGE};
  color: #fff;
  font-size: 12px;
  line-height: 25px;
`;

const Section = styled.section`
  padding: 0 9px 12px 32px;
`;

const SectionTitle = styled.h3`
  display: flex;
  align-items: center;
  gap: 7px;
  height: 24px;
  margin: 0 0 0 -17px;
  font-size: 12px;
  font-weight: 600;
  color: #333;
`;

const Row = styled.div`
  display: grid;
  grid-template-columns: ${(p) => (p.$split === "wide" ? "1fr 248px" : "1fr 144px")};
  align-items: center;
  height: 24px;
  color: ${(p) => (p.$dark ? "#000" : "#444")};
  white-space: nowrap;
`;

const TextInput = styled.input`
  width: 100%;
  height: 20px;
  padding: 0 4px;
  border: 1px solid #ddd;
  color: #000;
`;

const SelectBox = styled.div`
  position: relative;

  svg {
    position: absolute;
    right: 4px;
    top: 5px;
    pointer-events: none;
  }
`;

const SelectInput = styled.select`
  display: block;
  width: 100%;
  height: 20px;
  padding: 0 ${(p) => (p.$tight ? 0 : 5)}px;
  appearance: none;
  border: 1px solid #ddd;
  border-radius: 0;
  background: #fff;
  color: #000;
`;

const CheckBox = styled.span`
  position: relative;
  display: block;
  width: 12px;
  height: 12px;

  input {
    display: block;
    width: 12px;
    height: 12px;
    margin: 0;
    appearance: none;
    border: 1px solid #ddd;
  }
  svg {
    position: absolute;
    inset: 0;
    pointer-events: none;
  }
  input:not(:checked) + svg {
    display: none;
  }
`;

const AnchorageGroup = styled.div`
  display: flex;
  gap: ${(p) => (p.$wide ? 2 : 0)}px;
`;

const AnchorageButton = styled.button`
  display: flex;
  align-items: center;
  justify-content: center;
  width: 20px;
  height: 20px;
  padding: 0;
  border: 0;
  background: ${(p) => (p.$on ? "#d6d6d6" : "none")};
`;

const VolumeLabel = styled.div`
  line-height: 20px;
`;

const Volumes = styled.div`
  display: flex;
  gap: 4px;
  height: 41px;
  padding-top: 7px;
`;

const VolumeButton = styled.button`
  position: relative;
  width: 56px;
  height: 36px;
  padding: 0;
  border: 1px solid ${(p) => (p.$on ? ORANGE : "#444")};
  border-radius: 8px;
  background: #fff;
  color: ${(p) => (p.$on ? ORANGE : "#444")};
  font-weight: 700;
`;

const Footer = styled.footer`
  display: flex;
  align-items: center;
  gap: 16px;
  height: 33px;
  padding: 0 8px;
  background: #000;
  color: #fff;

  b {
    font-weight: 600;
  }
`;
